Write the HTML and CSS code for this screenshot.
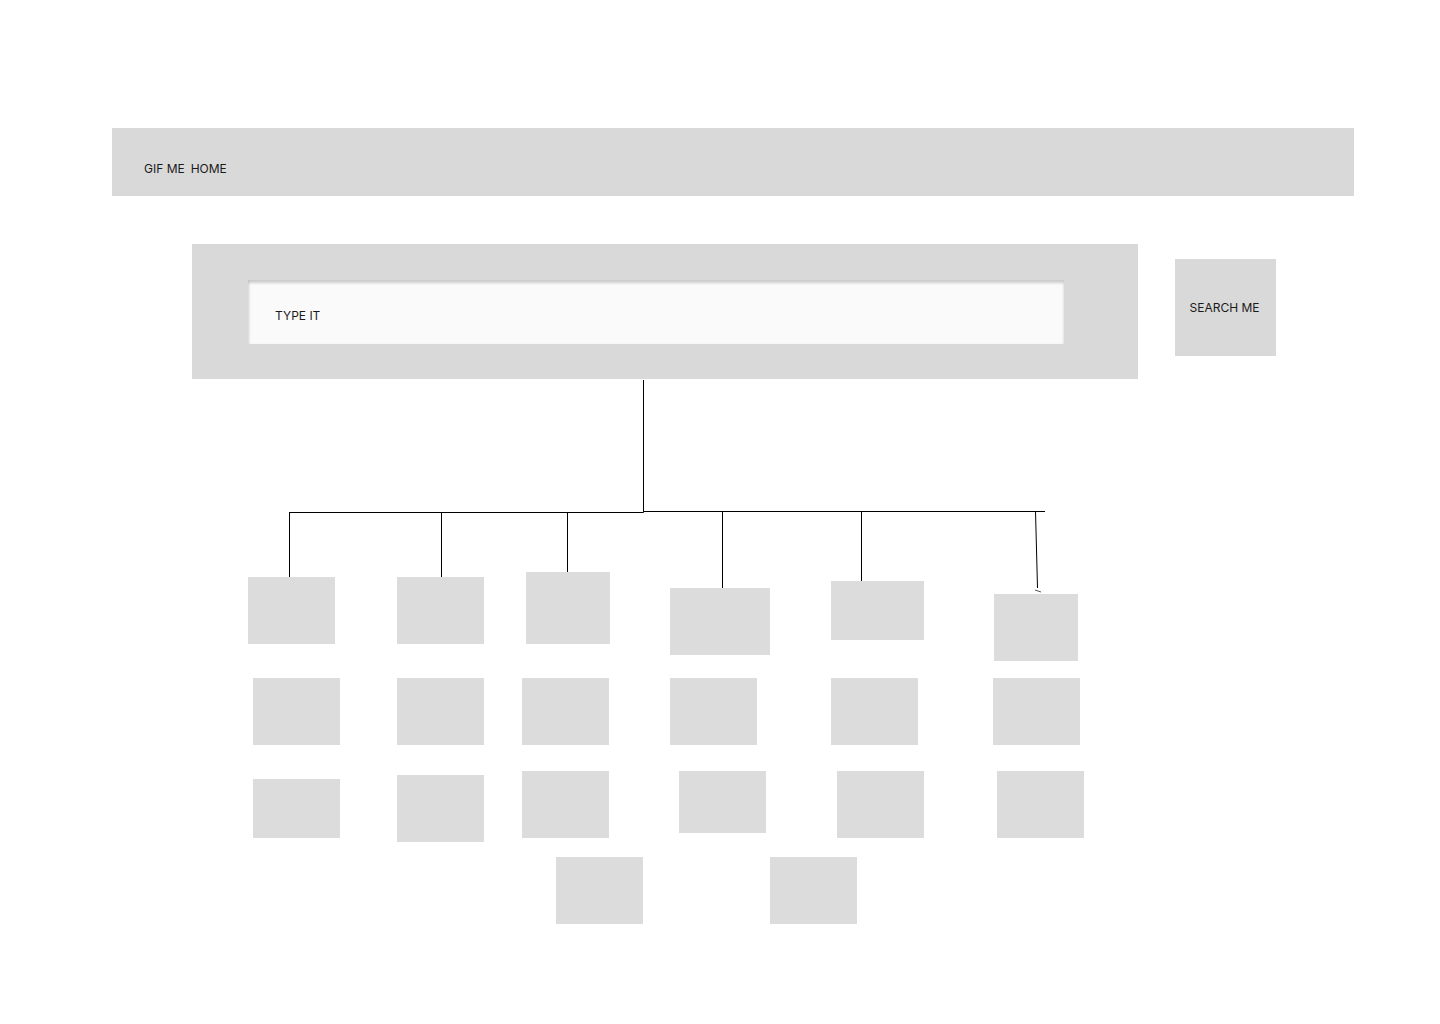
FILE: index.html
```html
<!DOCTYPE html>
<html lang="en">
<head>
    <meta charset="UTF-8">
    <meta name="viewport" content="width=device-width, initial-scale=1.0">
    <title>GIF ME</title>
    <link rel="stylesheet" href="styles.css">
</head>
<body>
<div class="top-bar">
    <span class="brand">GIF ME</span>
    <a class="nav-link" href="#">HOME</a>
</div>
<div class="search-row">
    <div class="search-panel">
        <input type="text" id="searchInput" class="search-input" placeholder="TYPE IT">
    </div>
    <button class="search-btn" id="searchBtn">SEARCH ME</button>
</div>
<svg class="results-tree" width="1440" height="645" viewBox="0 379 1440 645" xmlns="http://www.w3.org/2000/svg">
    <!-- connectors -->
    <g class="wire">
        <line x1="643.5" y1="380" x2="643.5" y2="512.5"/>
        <line x1="289" y1="512.5" x2="643.5" y2="512.5"/>
        <line x1="643.5" y1="511.5" x2="1045" y2="511.5"/>
        <line x1="289.5" y1="512" x2="289.5" y2="577"/>
        <line x1="441.5" y1="512" x2="441.5" y2="577"/>
        <line x1="567.5" y1="512" x2="567.5" y2="572"/>
        <line x1="722.5" y1="511" x2="722.5" y2="588"/>
        <line x1="861.5" y1="511" x2="861.5" y2="581"/>
        <line x1="1035.5" y1="511" x2="1037.5" y2="588"/>
        <line class="tick" x1="1035" y1="590" x2="1041" y2="592"/>
    </g>
    <!-- gif slots -->
    <g class="slot">
        <rect x="248" y="577" width="87" height="67"/>
        <rect x="397" y="577" width="87" height="67"/>
        <rect x="526" y="572" width="84" height="72"/>
        <rect x="670" y="588" width="100" height="67"/>
        <rect x="831" y="581" width="93" height="59"/>
        <rect x="994" y="594" width="84" height="67"/>

        <rect x="253" y="678" width="87" height="67"/>
        <rect x="397" y="678" width="87" height="67"/>
        <rect x="522" y="678" width="87" height="67"/>
        <rect x="670" y="678" width="87" height="67"/>
        <rect x="831" y="678" width="87" height="67"/>
        <rect x="993" y="678" width="87" height="67"/>

        <rect x="253" y="779" width="87" height="59"/>
        <rect x="397" y="775" width="87" height="67"/>
        <rect x="522" y="771" width="87" height="67"/>
        <rect x="679" y="771" width="87" height="62"/>
        <rect x="837" y="771" width="87" height="67"/>
        <rect x="997" y="771" width="87" height="67"/>

        <rect x="556" y="857" width="87" height="67"/>
        <rect x="770" y="857" width="87" height="67"/>
    </g>
</svg>
</body>
</html>
```
FILE: styles.css
```css
body {
    margin: 0;
    background: #ffffff;
    font-family: Inter, 'Liberation Sans', sans-serif;
    font-size: 12px;
    color: #1a1a1a;
}
.top-bar {
    display: flex;
    align-items: center;
    gap: 6px;
    box-sizing: border-box;
    width: 1242px;
    height: 68px;
    margin: 128px 0 0 112px;
    padding: 12px 0 0 32px;
    background-color: #d9d9d9;
}
.nav-link {
    color: #1a1a1a;
    text-decoration: none;
}
.search-row {
    display: flex;
    align-items: flex-start;
    margin-top: 48px;
    padding-left: 192px;
}
.search-panel {
    box-sizing: border-box;
    width: 946px;
    height: 135px;
    padding: 36px 0 0 56px;
    background-color: #d9d9d9;
}
.search-input {
    display: block;
    box-sizing: border-box;
    width: 816px;
    height: 64px;
    padding: 7px 0 0 27px;
    border: none;
    outline: none;
    background-color: #fafafa;
    box-shadow: inset 0 3px 3px rgba(0, 0, 0, 0.18), inset 2px 0 2px rgba(0, 0, 0, 0.05);
    font-family: inherit;
    font-size: 12px;
    color: #1a1a1a;
}
.search-input::placeholder {
    color: #1a1a1a;
    opacity: 1;
}
.search-btn {
    width: 101px;
    height: 97px;
    margin: 15px 0 0 37px;
    padding: 0 2px 0 0;
    border: none;
    background-color: #d9d9d9;
    font-family: inherit;
    font-size: 12px;
    color: #1a1a1a;
    cursor: pointer;
}
.results-tree {
    display: block;
}
.wire line {
    stroke: #000000;
    stroke-width: 1;
}
.wire .tick {
    stroke: #555555;
}
.slot rect {
    fill: #dcdcdc;
}
```
